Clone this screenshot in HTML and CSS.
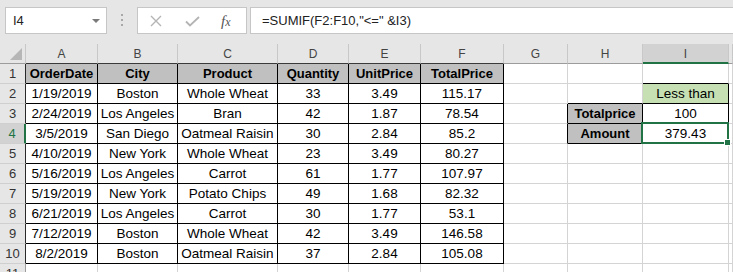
FILE: index.html
```html
<!DOCTYPE html>
<html>
<head>
<meta charset="utf-8">
<link rel="stylesheet" href="styles.css">
</head>
<body>
<div class="app">
  <div class="toolbar">
    <div class="namebox"><span>I4</span><span class="caret"></span></div>
    <div class="grip"><i></i><i></i><i></i></div>
    <div class="fxbox">
      <svg class="ico-x" width="12" height="12" viewBox="0 0 12 12"><path d="M1 1L11 11M11 1L1 11" stroke="#b4b4b4" stroke-width="1.4" fill="none"/></svg>
      <svg class="ico-ok" width="15" height="11" viewBox="0 0 15 11"><path d="M1 5.5L5 9.5L14 1" stroke="#b4b4b4" stroke-width="1.8" fill="none"/></svg>
      <span class="fx">f<span class="fx-x">x</span></span>
    </div>
    <div class="formula">=SUMIF(F2:F10,"&lt;=" &amp;I3)</div>
  </div>
  <div class="sheet">
    <div class="c corner"></div>
    <div class="c ch tb">A</div><div class="c ch tb">B</div><div class="c ch tb">C</div><div class="c ch tb">D</div><div class="c ch tb">E</div><div class="c ch tb">F</div>
    <div class="c ch">G</div><div class="c ch">H</div><div class="c ch sel">I</div><div class="c ch"></div>

    <div class="c rh tb">1</div>
    <div class="c t th">OrderDate</div><div class="c t th">City</div><div class="c t th">Product</div><div class="c t th">Quantity</div><div class="c t th">UnitPrice</div><div class="c t th">TotalPrice</div>
    <div class="c"></div><div class="c"></div><div class="c bb"></div><div class="c"></div>

    <div class="c rh tb">2</div>
    <div class="c t">1/19/2019</div><div class="c t">Boston</div><div class="c t">Whole Wheat</div><div class="c t">33</div><div class="c t">3.49</div><div class="c t">115.17</div>
    <div class="c"></div><div class="c bb"></div><div class="c t gr">Less than</div><div class="c"></div>

    <div class="c rh tb">3</div>
    <div class="c t">2/24/2019</div><div class="c t">Los Angeles</div><div class="c t">Bran</div><div class="c t">42</div><div class="c t">1.87</div><div class="c t">78.54</div>
    <div class="c br"></div><div class="c t th">Totalprice</div><div class="c t">100</div><div class="c"></div>

    <div class="c rh tb on">4</div>
    <div class="c t">3/5/2019</div><div class="c t">San Diego</div><div class="c t">Oatmeal Raisin</div><div class="c t">30</div><div class="c t">2.84</div><div class="c t">85.2</div>
    <div class="c br"></div><div class="c t th">Amount</div><div class="c t active">379.43<span class="selbox"><span class="handle"></span></span></div><div class="c"></div>

    <div class="c rh tb">5</div>
    <div class="c t">4/10/2019</div><div class="c t">New York</div><div class="c t">Whole Wheat</div><div class="c t">23</div><div class="c t">3.49</div><div class="c t">80.27</div>
    <div class="c"></div><div class="c"></div><div class="c"></div><div class="c"></div>

    <div class="c rh tb">6</div>
    <div class="c t">5/16/2019</div><div class="c t">Los Angeles</div><div class="c t">Carrot</div><div class="c t">61</div><div class="c t">1.77</div><div class="c t">107.97</div>
    <div class="c"></div><div class="c"></div><div class="c"></div><div class="c"></div>

    <div class="c rh tb">7</div>
    <div class="c t">5/19/2019</div><div class="c t">New York</div><div class="c t">Potato Chips</div><div class="c t">49</div><div class="c t">1.68</div><div class="c t">82.32</div>
    <div class="c"></div><div class="c"></div><div class="c"></div><div class="c"></div>

    <div class="c rh tb">8</div>
    <div class="c t">6/21/2019</div><div class="c t">Los Angeles</div><div class="c t">Carrot</div><div class="c t">30</div><div class="c t">1.77</div><div class="c t">53.1</div>
    <div class="c"></div><div class="c"></div><div class="c"></div><div class="c"></div>

    <div class="c rh tb">9</div>
    <div class="c t">7/12/2019</div><div class="c t">Boston</div><div class="c t">Whole Wheat</div><div class="c t">42</div><div class="c t">3.49</div><div class="c t">146.58</div>
    <div class="c"></div><div class="c"></div><div class="c"></div><div class="c"></div>

    <div class="c rh tb">10</div>
    <div class="c t">8/2/2019</div><div class="c t">Boston</div><div class="c t">Oatmeal Raisin</div><div class="c t">37</div><div class="c t">2.84</div><div class="c t">105.08</div>
    <div class="c"></div><div class="c"></div><div class="c"></div><div class="c"></div>

    <div class="c rh">11</div>
    <div class="c"></div><div class="c"></div><div class="c"></div><div class="c"></div><div class="c"></div><div class="c"></div>
    <div class="c"></div><div class="c"></div><div class="c"></div><div class="c"></div>
  </div>
</div>
</body>
</html>
```

FILE: styles.css
```css
html, body {
  margin: 0;
  padding: 0;
  background: #ffffff;
}

.app {
  width: 733px;
  height: 272px;
  overflow: hidden;
  font-family: "Liberation Sans", Arial, sans-serif;
  color: #000;
}

/* ---------- formula bar ---------- */
.toolbar {
  height: 44px;
  box-sizing: border-box;
  padding-top: 7px;
  background: #e6e6e6;
  display: flex;
  align-items: flex-start;
}

.namebox {
  margin-left: 5px;
  width: 102px;
  height: 27px;
  box-sizing: border-box;
  border: 1px solid #c6c6c6;
  background: #fff;
  display: flex;
  align-items: center;
  padding-left: 7px;
  font-size: 13px;
  color: #222;
}

.caret {
  margin-left: auto;
  margin-right: 6px;
  width: 0;
  height: 0;
  border-left: 4px solid transparent;
  border-right: 4px solid transparent;
  border-top: 4px solid #7a7a7a;
}

.grip {
  margin-left: 14px;
  margin-top: 7px;
  width: 2px;
  display: flex;
  flex-direction: column;
  gap: 3px;
}

.grip i {
  display: block;
  width: 2px;
  height: 2px;
  background: #a8a8a8;
}

.fxbox {
  margin-left: 14px;
  width: 110px;
  height: 27px;
  box-sizing: border-box;
  border: 1px solid #c6c6c6;
  background: #fff;
  display: flex;
  align-items: center;
  padding-left: 12px;
}

.ico-ok {
  margin-left: 23px;
  margin-top: 2px;
}

.fx {
  margin-left: 21px;
  font-family: "Liberation Serif", serif;
  font-style: italic;
  font-size: 15px;
  color: #555;
  margin-top: 1px;
}

.fx-x {
  font-size: 12px;
}

.formula {
  margin-left: 3px;
  flex: 1;
  margin-right: -2px;
  height: 27px;
  box-sizing: border-box;
  border: 1px solid #c6c6c6;
  background: #fff;
  padding-left: 11px;
  font-size: 13px;
  line-height: 25px;
  color: #222;
  white-space: nowrap;
}

/* ---------- sheet grid ---------- */
.sheet {
  display: grid;
  grid-template-columns: 26px 72px 80px 100px 71px 72px 83px 64px 75px 86px 1fr;
  grid-auto-rows: 20px;
}

.c {
  box-sizing: border-box;
  border-right: 1px solid #d4d4d4;
  border-bottom: 1px solid #d4d4d4;
  text-align: center;
  white-space: nowrap;
  font-size: 13.5px;
  line-height: 20px;
  background: #fff;
}

.corner {
  position: relative;
  background: #e6e6e6;
  border-right-color: #c8c8c8;
  border-bottom-color: #9c9c9c;
}

.corner::after {
  content: "";
  position: absolute;
  right: 3px;
  bottom: 3px;
  width: 0;
  height: 0;
  border-left: 12px solid transparent;
  border-bottom: 12px solid #b6b6b6;
}

.ch {
  background: #e6e6e6;
  border-right-color: #c8c8c8;
  border-bottom-color: #9c9c9c;
  font-size: 12px;
  line-height: 21px;
  color: #444;
}

.ch.tb {
  border-bottom-color: #3a3a3a;
}

.ch.sel {
  background: #d2d2d2;
  border-bottom: 2px solid #217346;
  line-height: 20px;
}

.rh {
  background: #e6e6e6;
  border-right-color: #9c9c9c;
  border-bottom-color: #cfcfcf;
  font-size: 13px;
  color: #333;
}

.rh.tb {
  border-right-color: #2a2a2a;
}

.rh.on {
  background: #d2d2d2;
  border-right: 2px solid #217346;
  color: #217346;
}

.t {
  border-right-color: #000;
  border-bottom-color: #000;
}

.br {
  border-right-color: #000;
}

.bb {
  border-bottom-color: #000;
}

.th {
  background: #c0c0c0;
  font-weight: bold;
  font-size: 13px;
}

.gr {
  background: #c6e0b4;
}

.active {
  position: relative;
}

.selbox {
  position: absolute;
  left: -2px;
  top: -2px;
  right: -1px;
  bottom: -1px;
  border: 2px solid #217346;
  z-index: 2;
}

.handle {
  position: absolute;
  right: -4px;
  bottom: -4px;
  width: 5px;
  height: 5px;
  background: #217346;
  border: 1px solid #fff;
}
```
